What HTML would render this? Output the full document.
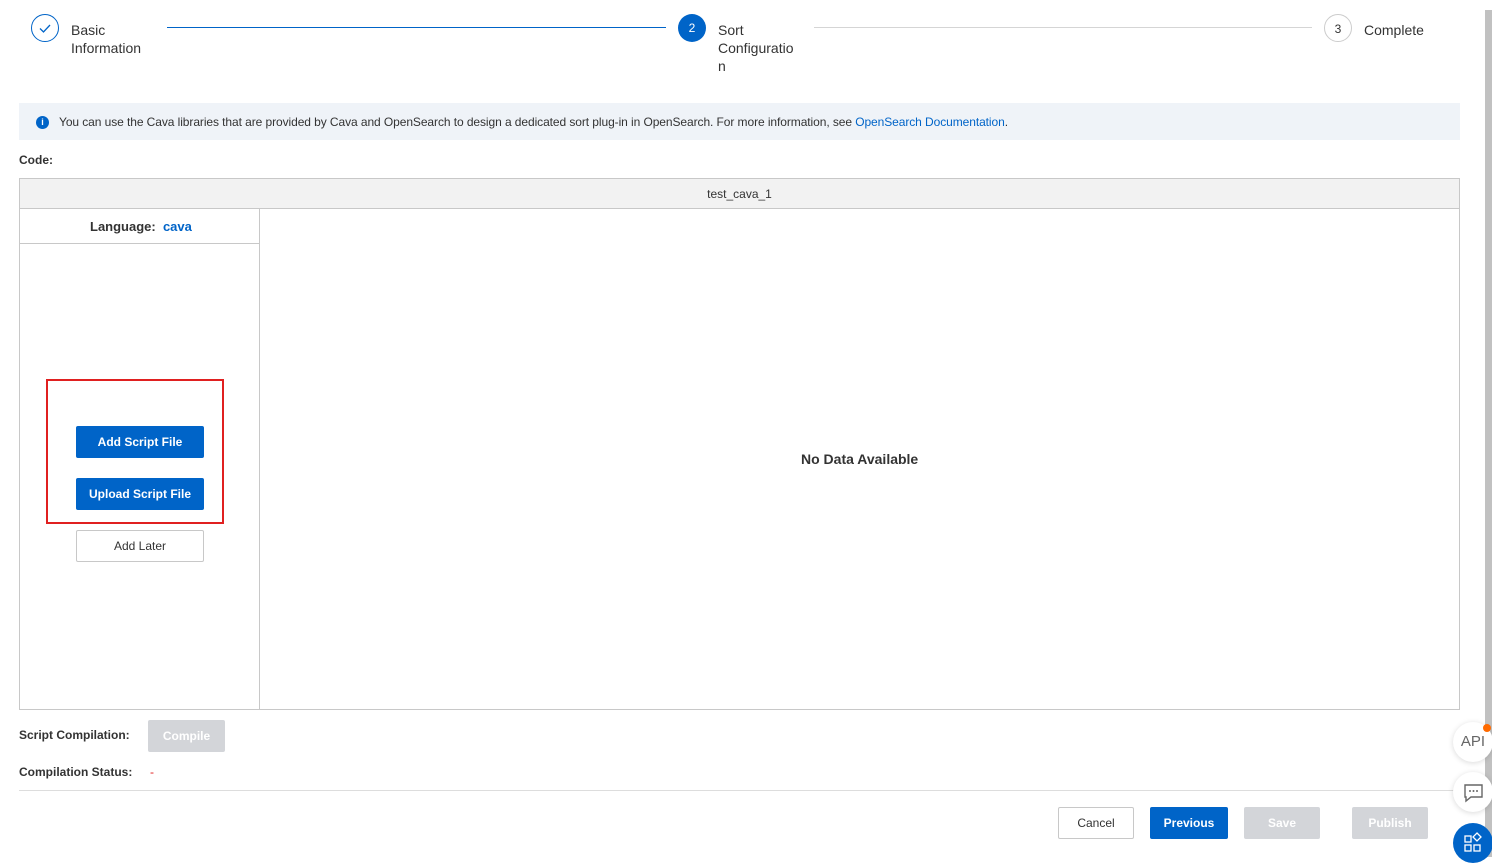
<!DOCTYPE html>
<html><head><meta charset="utf-8"><style>
*{box-sizing:border-box;margin:0;padding:0}
body{width:1492px;height:857px;overflow:hidden;background:#fff;font-family:"Liberation Sans",sans-serif;color:#333;position:relative;font-size:12px}
.abs{position:absolute}
.circ{position:absolute;width:28px;height:28px;border-radius:50%;text-align:center;line-height:28px;font-size:12px}
.st{position:absolute;font-size:14px;line-height:18px;color:#333}
.btn{position:absolute;height:32px;line-height:33px;text-align:center;font-size:12px;border-radius:2px}
.blue{background:#0064c8;color:#fff;font-weight:bold}
.dis{background:#d3d5d9;color:#fff;font-weight:bold}
.fab{position:absolute;width:40px;height:40px;border-radius:50%;background:#fff;box-shadow:0 1px 6px rgba(0,0,0,.15)}
</style></head><body>
<div class="circ" style="left:31px;top:14px;border:1px solid #0064c8;color:#0064c8">
<svg width="28" height="28" style="position:absolute;left:-1px;top:-1px"><path d="M9 14.5l3.5 3.5 6.5-7" fill="none" stroke="#0064c8" stroke-width="1.3"/></svg></div>
<div class="st" style="left:71px;top:21px">Basic<br>Information</div>
<div class="abs" style="left:167px;top:27px;width:499px;height:1px;background:#0064c8"></div>
<div class="circ" style="left:678px;top:14px;background:#0064c8;color:#fff">2</div>
<div class="st" style="left:718px;top:21px">Sort<br>Configuratio<br>n</div>
<div class="abs" style="left:814px;top:27px;width:498px;height:1px;background:#d5d5d5"></div>
<div class="circ" style="left:1324px;top:14px;border:1px solid #ccc;color:#333">3</div>
<div class="st" style="left:1364px;top:21px">Complete</div>
<div class="abs" style="left:19px;top:103px;width:1441px;height:37px;background:#eff3f8"></div>
<div class="abs" style="left:36px;top:116px;width:13px;height:13px;border-radius:50%;background:#0064c8;color:#fff;font-size:9px;font-weight:bold;text-align:center;line-height:13px">i</div>
<div class="abs" style="left:59px;top:115px;font-size:12px;letter-spacing:-0.08px;color:#333;white-space:nowrap">You can use the Cava libraries that are provided by Cava and OpenSearch to design a dedicated sort plug-in in OpenSearch. For more information, see <span style="color:#0064c8">OpenSearch Documentation</span>.</div>
<div class="abs" style="left:19px;top:153px;font-weight:bold;font-size:12px;color:#333">Code:</div>
<div class="abs" style="left:19px;top:178px;width:1441px;height:532px;border:1px solid #c8c8c8"></div>
<div class="abs" style="left:20px;top:179px;width:1439px;height:30px;background:#f2f2f2;border-bottom:1px solid #c8c8c8;text-align:center;line-height:30px;font-size:12px">test_cava_1</div>
<div class="abs" style="left:259px;top:209px;width:1px;height:500px;background:#c8c8c8"></div>
<div class="abs" style="left:20px;top:243px;width:239px;height:1px;background:#c8c8c8"></div>
<div class="abs" style="left:90px;top:219px;font-size:13px;font-weight:bold">Language: &nbsp;<span style="color:#0064c8">cava</span></div>
<div class="abs" style="left:46px;top:379px;width:178px;height:145px;border:2px solid #e02020"></div>
<div class="btn blue" style="left:76px;top:426px;width:128px">Add Script File</div>
<div class="btn blue" style="left:76px;top:478px;width:128px">Upload Script File</div>
<div class="btn" style="left:76px;top:530px;width:128px;border:1px solid #c8c8c8;color:#333;line-height:31px">Add Later</div>
<div class="abs" style="left:801px;top:451px;font-size:14px;font-weight:bold;color:#333">No Data Available</div>
<div class="abs" style="left:19px;top:728px;font-weight:bold;font-size:12px">Script Compilation:</div>
<div class="btn dis" style="left:148px;top:720px;width:77px">Compile</div>
<div class="abs" style="left:19px;top:765px;font-weight:bold;font-size:12px">Compilation Status:</div>
<div class="abs" style="left:150px;top:765px;color:#e02020">-</div>
<div class="abs" style="left:19px;top:790px;width:1467px;height:1px;background:#ddd"></div>
<div class="btn" style="left:1058px;top:807px;width:76px;border:1px solid #c8c8c8;color:#333;line-height:31px">Cancel</div>
<div class="btn blue" style="left:1150px;top:807px;width:78px">Previous</div>
<div class="btn dis" style="left:1244px;top:807px;width:76px">Save</div>
<div class="btn dis" style="left:1352px;top:807px;width:76px">Publish</div>
<div class="abs" style="left:1485px;top:10px;width:7px;height:847px;background:#c1c1c1"></div>
<div class="fab" style="left:1453px;top:722px;text-align:center;line-height:40px;font-size:15px;color:#666;font-family:'Liberation Sans Narrow','Liberation Sans',sans-serif">API</div>
<div class="abs" style="left:1483px;top:724px;width:8px;height:8px;border-radius:50%;background:#ff6a00"></div>
<div class="fab" style="left:1453px;top:772px"><svg width="40" height="40"><path d="M12 13h17v12h-11l-5 4v-4h-1z" fill="none" stroke="#666" stroke-width="1.4"/><circle cx="17" cy="19" r="1" fill="#666"/><circle cx="20.5" cy="19" r="1" fill="#666"/><circle cx="24" cy="19" r="1" fill="#666"/></svg></div>
<div class="abs" style="left:1453px;top:823px;width:40px;height:40px;border-radius:50%;background:#0064c8"><svg width="40" height="40"><g fill="none" stroke="#fff" stroke-width="1.3"><rect x="12" y="13" width="6" height="6"/><rect x="12" y="22" width="6" height="6"/><rect x="21" y="22" width="6" height="6"/><path d="M24 10l4 4-4 4-4-4z"/></g></svg></div>
</body></html>
